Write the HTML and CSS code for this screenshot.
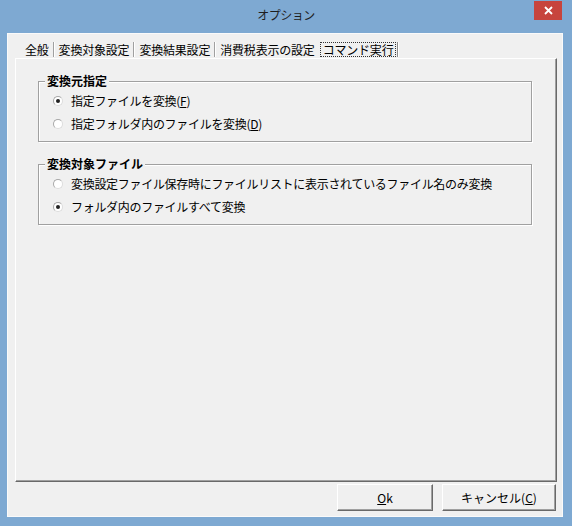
FILE: index.html
```html
<!DOCTYPE html>
<html lang="ja">
<head>
  <meta charset="UTF-8">
  <meta name="viewport" content="width=device-width, initial-scale=1.0">
  <title>オプション</title>
  <link rel="stylesheet" href="styles.css">
</head>
<body>
  <div class="window">
    <div class="titlebar">
      <span class="title">オプション</span>
      <button type="button" class="close" aria-label="閉じる">
        <svg width="9" height="9" viewBox="0 0 9 9"><path d="M1 1L8 8M8 1L1 8" stroke="#fff" stroke-width="1.8"/></svg>
      </button>
    </div>

    <div class="client">
      <div class="tab-list">
        <span class="tab">全般</span>
        <span class="tab">変換対象設定</span>
        <span class="tab">変換結果設定</span>
        <span class="tab tab-plain">消費税表示の設定</span>
        <span class="tab tab-active"><span class="focus">コマンド実行</span></span>
      </div>

      <div class="tab-panel">
        <fieldset class="group">
          <legend>変換元指定</legend>
          <label class="radio-row"><span class="radio checked"></span><span>指定ファイルを変換(<u>F</u>)</span></label>
          <label class="radio-row"><span class="radio"></span><span>指定フォルダ内のファイルを変換(<u>D</u>)</span></label>
        </fieldset>

        <fieldset class="group">
          <legend>変換対象ファイル</legend>
          <label class="radio-row"><span class="radio"></span><span>変換設定ファイル保存時にファイルリストに表示されているファイル名のみ変換</span></label>
          <label class="radio-row"><span class="radio checked"></span><span>フォルダ内のファイルすべて変換</span></label>
        </fieldset>
      </div>

      <div class="buttons">
        <button type="button" class="btn btn-ok"><u>O</u>k</button>
        <button type="button" class="btn btn-cancel">キャンセル(<u>C</u>)</button>
      </div>
    </div>
  </div>
</body>
</html>
```

FILE: styles.css
```css
body {
  margin: 0;
  background: #7ea9d2;
  font-family: "Noto Sans CJK JP", "Liberation Sans", sans-serif;
  font-size: 12px;
  color: #000;
}

.window {
  width: 572px;
  height: 526px;
  display: flex;
  flex-direction: column;
}

.titlebar {
  height: 33px;
  display: grid;
  grid-template-columns: 1fr auto 1fr;
  align-items: start;
}

.title {
  grid-column: 2;
  line-height: 30px;
  font-size: 12px;
  letter-spacing: -0.5px;
  color: #1e1e1e;
}

.close {
  grid-column: 3;
  justify-self: end;
  margin: 1px 10px 0 0;
  width: 28px;
  height: 19px;
  padding: 0;
  border: none;
  background: #c7443d;
  display: flex;
  align-items: center;
  justify-content: center;
}

.client {
  flex: 1;
  margin: 0 9px 9px 7px;
  padding: 0 5px 0 7px;
  background: #f0f0f0;
  border: 1px solid #fafafa;
  display: flex;
  flex-direction: column;
}

/* tabs */
.tab-list {
  height: 24px;
  box-sizing: border-box;
  padding: 8px 0 0 10px;
  display: flex;
  align-items: flex-start;
}

.tab {
  line-height: 15px;
  padding-right: 4px;
  margin-right: 5px;
  border-right: 1px solid #a0a0a0;
  box-shadow: 1px 0 0 #fff;
  white-space: nowrap;
  letter-spacing: -0.2px;
}

.tab-plain {
  border-right: none;
  box-shadow: none;
  padding-right: 0;
}

.tab-active {
  padding-right: 1px;
  margin-right: 0;
  border-right: 1px solid #8c8c8c;
}

.focus {
  display: block;
  line-height: 13px;
  padding: 0 2px;
  border: 1px dotted #333;
}

.tab-panel {
  height: 424px;
  box-sizing: border-box;
  padding: 0 24px 0 22px;
  border-top: 1px solid #fff;
  border-left: 1px solid #fff;
  border-right: 1px solid #696969;
  border-bottom: 1px solid #696969;
  box-shadow: inset -1px -1px 0 #a0a0a0;
}

/* group boxes */
.group {
  margin: 15px 0 0;
  padding: 1px 0 6px;
  min-width: 0;
  border: 1px solid #a0a0a0;
  box-shadow: 1px 1px 0 #fff, inset 1px 1px 0 #fff;
}

.group legend {
  margin-left: 6px;
  padding: 0 2px;
  line-height: 14px;
  font-weight: bold;
  background: #f0f0f0;
}

.radio-row {
  height: 23px;
  padding-left: 14px;
  display: flex;
  align-items: center;
  gap: 8px;
  letter-spacing: -0.3px;
  white-space: nowrap;
}

.radio {
  width: 10px;
  height: 10px;
  box-sizing: border-box;
  border-radius: 50%;
  border: 1px solid #a8a8a8;
  border-right-color: #dcdcdc;
  border-bottom-color: #dcdcdc;
  background: #fff;
  display: flex;
  align-items: center;
  justify-content: center;
  flex: none;
}

.radio.checked::after {
  content: "";
  width: 4px;
  height: 4px;
  border-radius: 50%;
  background: #222;
}

/* bottom buttons */
.buttons {
  margin-top: 2px;
  display: flex;
  justify-content: flex-end;
  gap: 9px;
  padding-right: 1px;
}

.btn {
  height: 27px;
  padding: 0;
  font-family: inherit;
  font-size: 12px;
  color: #000;
  background: #f0f0f0;
  border-top: 1px solid #fff;
  border-left: 1px solid #fff;
  border-right: 1px solid #696969;
  border-bottom: 1px solid #696969;
  box-shadow: inset -1px -1px 0 #a0a0a0;
}

.btn-ok {
  width: 96px;
}

.btn-cancel {
  width: 114px;
}
```
